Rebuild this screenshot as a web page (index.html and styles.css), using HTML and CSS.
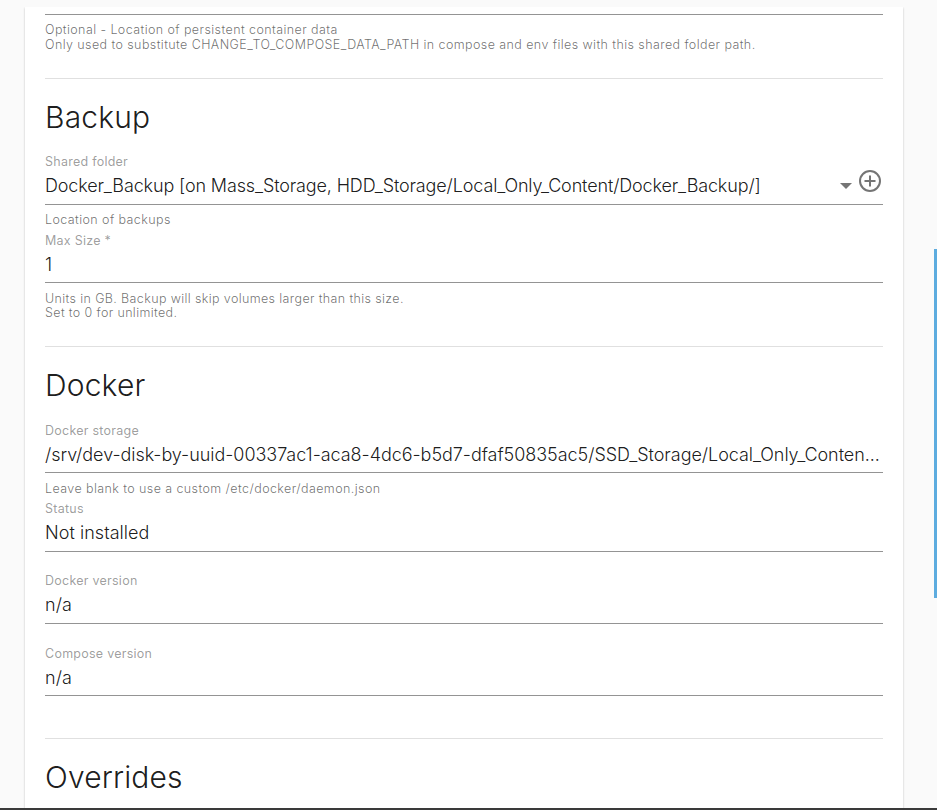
FILE: index.html
```
<!DOCTYPE html>
<html lang="en">
<head>
<meta charset="utf-8">
<title>Settings</title>
<link rel="stylesheet" href="styles.css">
</head>
<body>
<main class="page">
  <div class="card">
    <div class="field-end"></div>
    <p class="hint hint-first">Optional - Location of persistent container data<br>Only used to substitute CHANGE_TO_COMPOSE_DATA_PATH in compose and env files with this shared folder path.</p>

    <section class="section backup">
      <h1>Backup</h1>
      <div class="field">
        <div class="label">Shared folder</div>
        <div class="row">
          <div class="value shared">Docker_Backup [on Mass_Storage, HDD_Storage/Local_Only_Content/Docker_Backup/]</div>
          <span class="arrow"></span>
          <svg class="add" viewBox="0 0 22 22"><circle cx="11" cy="11" r="10"/><path d="M11 5.5v11M5.5 11h11"/></svg>
        </div>
      </div>
      <p class="hint">Location of backups</p>
      <div class="field compact">
        <div class="label">Max Size *</div>
        <div class="value">1</div>
      </div>
      <p class="hint hint-units">Units in GB. Backup will skip volumes larger than this size.<br>Set to 0 for unlimited.</p>
    </section>

    <section class="section docker">
      <h1>Docker</h1>
      <div class="field compact">
        <div class="label">Docker storage</div>
        <div class="value path">/srv/dev-disk-by-uuid-00337ac1-aca8-4dc6-b5d7-dfaf50835ac5/SSD_Storage/Local_Only_Conten...</div>
      </div>
      <p class="hint hint-storage">Leave blank to use a custom /etc/docker/daemon.json</p>
      <div class="field">
        <div class="label">Status</div>
        <div class="value">Not installed</div>
      </div>
      <div class="field spaced">
        <div class="label">Docker version</div>
        <div class="value">n/a</div>
      </div>
      <div class="field spaced compact">
        <div class="label">Compose version</div>
        <div class="value">n/a</div>
      </div>
    </section>

    <section class="section">
      <h1>Overrides</h1>
    </section>
  </div>
  <div class="scroll-thumb"></div>
</main>
<footer class="edge"></footer>
</body>
</html>
```
FILE: styles.css
```
* { box-sizing: border-box; }
html, body { margin: 0; height: 100%; overflow: hidden; }
body {
  display: flex;
  flex-direction: column;
  background: #fafafa;
  color: rgba(0, 0, 0, 0.9);
  font-family: Inter, "Liberation Sans", sans-serif;
  font-weight: 300;
}
.page {
  flex: 1;
  min-height: 0;
  display: flex;
  justify-content: space-between;
  margin-top: 7px;
  padding-left: 25px;
  overflow: hidden;
}
.card {
  width: 878px;
  height: 840px;
  padding: 0 20px;
  background: #fff;
  box-shadow: 0 1px 2px rgba(0, 0, 0, 0.24);
}
.scroll-thumb {
  width: 3px;
  height: 349px;
  margin-top: 242px;
  background: #5dacdf;
}
.edge { height: 2px; background: #3a3a3a; }

.field-end { height: 8px; border-bottom: 1px solid #949494; }
.hint {
  height: 26px;
  margin: 0;
  padding-top: 7px;
  font-size: 12.5px;
  line-height: 15px;
  letter-spacing: 0.41px;
  color: rgba(0, 0, 0, 0.58);
  white-space: nowrap;
}
.hint-first { height: 63px; }
.hint-units { height: 63px; padding-top: 9px; line-height: 14px; letter-spacing: 0.37px; }
.hint-storage { height: 27px; padding-top: 8px; }

.section { border-top: 1px solid #e0e0e0; }
h1 {
  height: 74px;
  margin: 0;
  padding-top: 20px;
  font-size: 30px;
  font-weight: 300;
  line-height: 36px;
  letter-spacing: 0.15px;
}
.docker { height: 392px; }

.field {
  height: 52px;
  padding-top: 1px;
  border-bottom: 1px solid #949494;
}
.field.spaced { margin-top: 20px; }
.field.compact { padding-top: 2px; }
.label {
  height: 16px;
  margin-bottom: 4px;
  font-size: 12.5px;
  font-weight: 400;
  line-height: 16px;
  letter-spacing: 0.25px;
  color: rgba(0, 0, 0, 0.4);
}
.value {
  height: 24px;
  font-size: 18px;
  line-height: 24px;
  letter-spacing: 0.04px;
  white-space: nowrap;
}
.value.path { letter-spacing: -0.05px; }
.row { display: flex; }
.value.shared { flex: 1; letter-spacing: -0.14px; }
.arrow {
  width: 12px;
  height: 6px;
  margin: 9px 7px 0 0;
  background: #757575;
  clip-path: polygon(0 0, 100% 0, 50% 100%);
}
.add {
  width: 22px;
  height: 22px;
  margin: -4px 2px 0 0;
  fill: none;
  stroke: #757575;
  stroke-width: 2;
}
```
